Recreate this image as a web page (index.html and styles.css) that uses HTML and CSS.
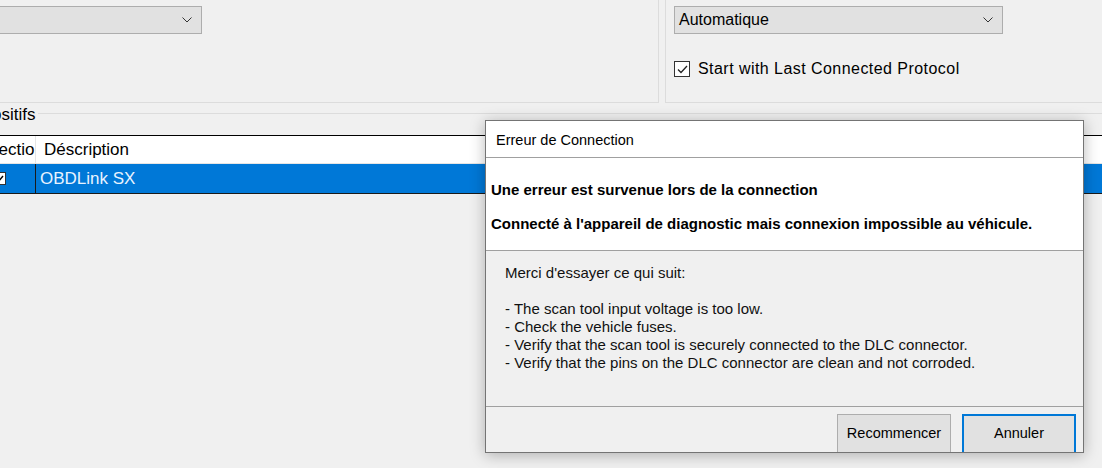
FILE: index.html
```html
<!DOCTYPE html>
<html lang="fr">
<head>
    <meta charset="UTF-8">
    <title>Connexion</title>
    <link rel="stylesheet" href="styles.css">
</head>
<body>
    <div class="window">
        <div class="top">
            <section class="group group-left">
                <div class="combo combo-left">
                    <span class="combo-text"></span>
                    <svg class="chevron" width="10" height="6" viewBox="0 0 10 6"><polyline points="0.5,0.5 5,5 9.5,0.5" fill="none" stroke="#333" stroke-width="1"/></svg>
                </div>
            </section>
            <section class="group group-right">
                <div class="combo combo-right">
                    <span class="combo-text">Automatique</span>
                    <svg class="chevron" width="10" height="6" viewBox="0 0 10 6"><polyline points="0.5,0.5 5,5 9.5,0.5" fill="none" stroke="#333" stroke-width="1"/></svg>
                </div>
                <label class="check-row">
                    <span class="checkbox">
                        <svg width="11" height="9" viewBox="0 0 11 9"><polyline points="1,4.5 4,7.5 10,1" fill="none" stroke="#222" stroke-width="1.3"/></svg>
                    </span>
                    Start with Last Connected Protocol
                </label>
            </section>
        </div>

        <section class="devices">
            <div class="devices-legend"><span>Dispositifs</span></div>
            <div class="list">
                <div class="list-head">
                    <div class="cell cell-sel">Sélection</div>
                    <div class="cell cell-desc">Déscription</div>
                </div>
                <div class="list-row selected">
                    <div class="cell cell-sel">
                        <span class="row-check">
                            <svg width="9" height="8" viewBox="0 0 9 8"><polyline points="1,4 3.5,6.5 8,1" fill="none" stroke="#000" stroke-width="1.4"/></svg>
                        </span>
                    </div>
                    <div class="cell cell-desc">OBDLink SX</div>
                </div>
            </div>
        </section>
    </div>

    <div class="dialog">
        <div class="dialog-title">Erreur de Connection</div>
        <div class="dialog-message">
            <p>Une erreur est survenue lors de la connection</p>
            <p>Connecté à l'appareil de diagnostic mais connexion impossible au véhicule.</p>
        </div>
        <div class="dialog-details">
            <p>Merci d'essayer ce qui suit:</p>
            <p>&nbsp;</p>
            <p>- The scan tool input voltage is too low.</p>
            <p>- Check the vehicle fuses.</p>
            <p>- Verify that the scan tool is securely connected to the DLC connector.</p>
            <p>- Verify that the pins on the DLC connector are clean and not corroded.</p>
        </div>
        <div class="dialog-buttons">
            <button class="btn">Recommencer</button>
            <button class="btn btn-default">Annuler</button>
        </div>
    </div>
</body>
</html>
```

FILE: styles.css
```css
* {
    margin: 0;
    padding: 0;
    box-sizing: border-box;
}

body {
    font-family: "Liberation Sans", Arial, sans-serif;
    background-color: #f0f0f0;
    color: #000;
    width: 1102px;
    height: 468px;
    overflow: hidden;
}

.window {
    width: 1102px;
}

/* top group boxes */
.top {
    display: flex;
    height: 103px;
}

.group {
    border-bottom: 1px solid #dcdcdc;
}

.group-left {
    width: 659px;
    border-right: 1px solid #dcdcdc;
    padding-top: 6px;
}

.group-right {
    flex: 1;
    margin-left: 6px;
    border-left: 1px solid #dcdcdc;
    padding: 6px 0 0 8px;
}

.combo {
    display: flex;
    align-items: center;
    height: 28px;
    background-color: #e1e1e1;
    border: 1px solid #adadad;
    padding: 0 9px 0 4px;
    font-size: 16px;
}

.combo-left {
    width: 202px;
    border-left: none;
}

.combo-right {
    width: 329px;
}

.combo-text {
    flex: 1;
}

.chevron {
    display: block;
}

.check-row {
    display: flex;
    align-items: center;
    margin-top: 26px;
    font-size: 16px;
    letter-spacing: 0.45px;
    gap: 8px;
}

.checkbox {
    width: 16px;
    height: 16px;
    border: 1px solid #333;
    background-color: #fff;
    display: flex;
    align-items: center;
    justify-content: center;
}

/* devices list */
.devices {
    margin-top: 4px;
}

.devices-legend {
    display: flex;
    margin-left: -42px;
    height: 16px;
    font-size: 17px;
    line-height: 16px;
}

.devices-legend::after {
    content: "";
    flex: 1;
    margin: 6px 0 0 3px;
    border-top: 1px solid #dcdcdc;
}

.list {
    margin-top: 12px;
    margin-left: -29px;
    border-top: 1px solid #000;
    font-size: 17px;
}

.list-head {
    display: flex;
    height: 28px;
    background-color: #fff;
    border-bottom: 1px solid #e5e5e5;
}

.list-row {
    display: flex;
    height: 30px;
    border-bottom: 1px solid #1a1a1a;
}

.list-row.selected {
    background-color: #0078d7;
    color: #e8f3ff;
}

.cell {
    display: flex;
    align-items: center;
    white-space: nowrap;
    overflow: hidden;
}

.cell-sel {
    width: 65px;
    padding-left: 3px;
    border-right: 1px solid #e5e5e5;
}

.cell-desc {
    flex: 1;
    padding-left: 8px;
}

.list-row .cell-desc {
    padding-left: 4px;
}

.list-row .cell-sel {
    border-right-color: #1a1a1a;
    padding-left: 22px;
}

.row-check {
    width: 13px;
    height: 13px;
    background-color: #fff;
    border: 1px solid #333;
    display: flex;
    align-items: center;
    justify-content: center;
}

/* error dialog */
.dialog {
    position: absolute;
    left: 485px;
    top: 120px;
    width: 599px;
    height: 333px;
    border: 1px solid #747474;
    background-color: #f0f0f0;
    box-shadow: 0 2px 14px rgba(0, 0, 0, 0.28);
    display: flex;
    flex-direction: column;
}

.dialog-title {
    height: 37px;
    background-color: #fff;
    border-bottom: 1px solid #a0a0a0;
    font-size: 14.5px;
    line-height: 38px;
    padding-left: 10px;
}

.dialog-message {
    height: 93px;
    background-color: #fff;
    border-bottom: 1px solid #a0a0a0;
    padding: 23px 0 0 5px;
    font-size: 15px;
    font-weight: bold;
}

.dialog-message p {
    line-height: 17px;
    margin-bottom: 17px;
}

.dialog-details {
    height: 156px;
    border-bottom: 1px solid #a0a0a0;
    padding: 13px 0 0 19px;
    font-size: 15px;
    line-height: 18px;
    color: #111;
}

.dialog-buttons {
    flex: 1;
    display: flex;
    justify-content: flex-end;
    align-items: flex-end;
    gap: 11px;
    padding-right: 7px;
}

.btn {
    width: 114px;
    height: 38px;
    background-color: #e1e1e1;
    border: 1px solid #adadad;
    border-bottom: none;
    font-family: "Liberation Sans", Arial, sans-serif;
    font-size: 14.5px;
    color: #000;
    padding-bottom: 2px;
}

.btn-default {
    border: 2px solid #0078d7;
    border-bottom: none;
}
```
